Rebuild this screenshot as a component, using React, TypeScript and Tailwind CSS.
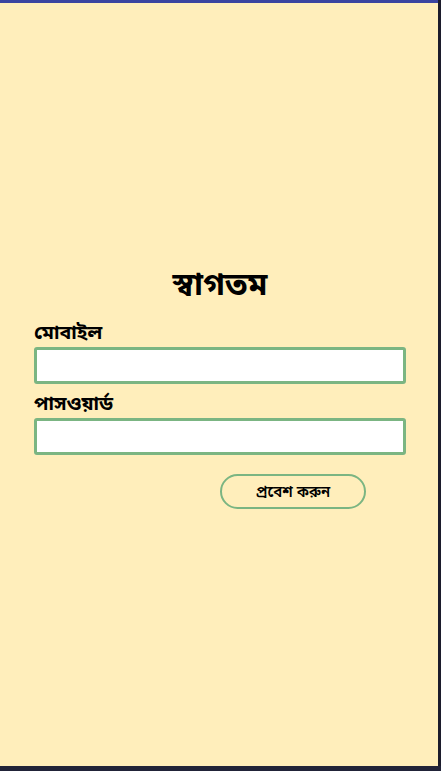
export default function App() {
  return (
    <div
      className="w-[441px] h-[771px] flex flex-col bg-[#212338]"
      style={{ fontFamily: '"Noto Sans", "Noto Sans Bengali", "Liberation Sans", sans-serif' }}
    >
      <div className="flex-1 flex">
        <div className="flex-1 flex flex-col justify-center bg-[#FFEEBB] border-t-[3px] border-[#3A44A0] pl-[34px] pr-[32px] pt-[1px]">
          <h1 className="text-center text-[32px] font-bold text-black leading-[44px] mb-[14px]">স্বাগতম</h1>
          <label className="block text-[19.5px] font-bold text-black leading-[26px] mb-[2px]">মোবাইল</label>
          <input className="block w-full h-[37px] bg-white border-[3px] border-[#7BB582] rounded-[3px] outline-none" />
          <label className="block text-[19.5px] font-bold text-black leading-[26px] mt-[6px] mb-[2px]">পাসওয়ার্ড</label>
          <input
            type="password"
            className="block w-full h-[37px] bg-white border-[3px] border-[#7BB582] rounded-[3px] outline-none"
          />
          <div className="flex mt-[19px]">
            <button className="ml-[186px] w-[146px] h-[35px] rounded-full border-2 border-[#7BB582] text-[15px] font-semibold text-black">
              প্রবেশ করুন
            </button>
          </div>
        </div>
        <div className="w-[3px] bg-[#1C1C2C]" />
      </div>
      <div className="h-[5px] bg-[#212338]" />
    </div>
  );
}
